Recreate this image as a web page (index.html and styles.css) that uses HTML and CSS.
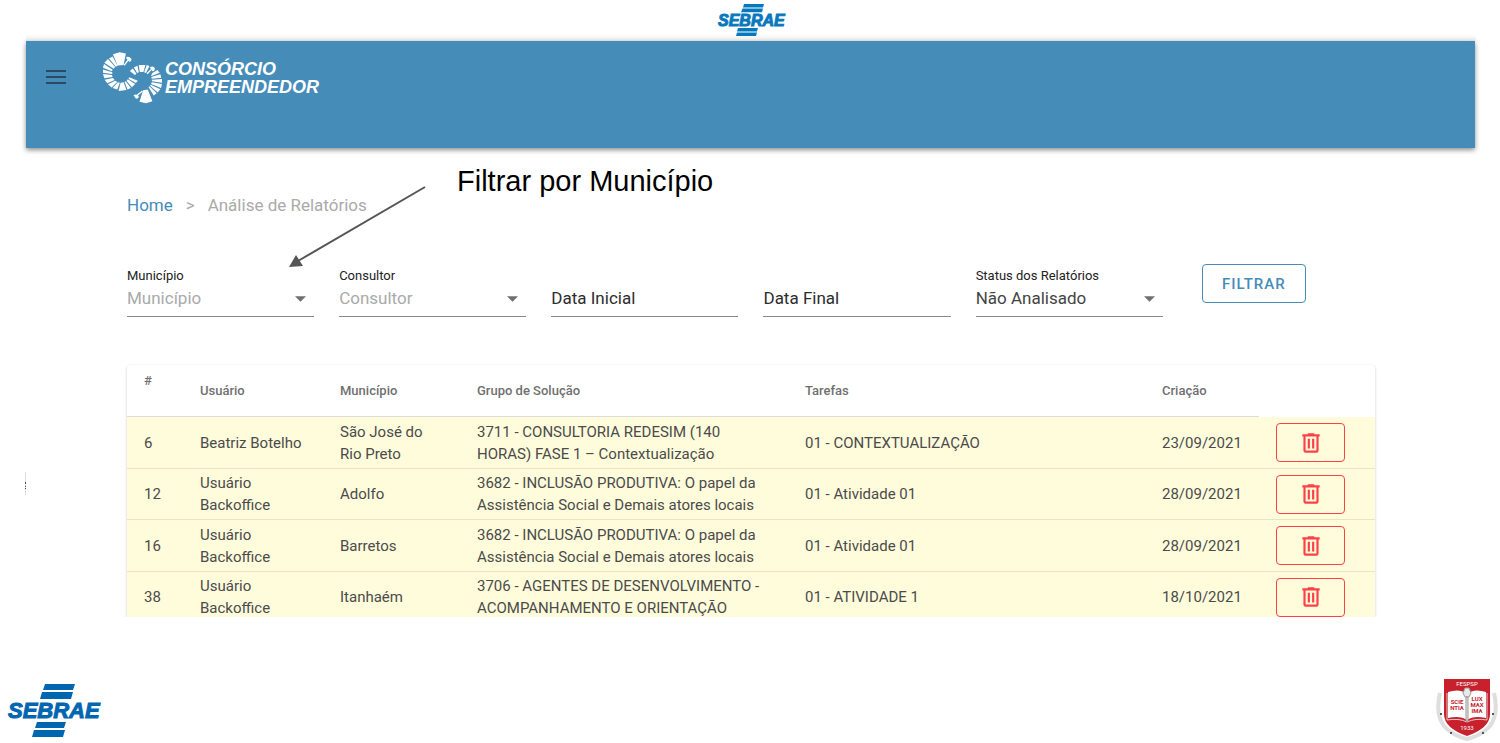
FILE: index.html
```html
<!DOCTYPE html>
<html lang="pt-BR">
<head>
<meta charset="utf-8">
<title>Análise de Relatórios</title>
<link rel="stylesheet" href="styles.css">
</head>
<body>
<svg class="defs" width="0" height="0" aria-hidden="true">
  <symbol id="trash" viewBox="0 0 24 24">
    <path d="M9 3V4H4V6H5V19A2 2 0 0 0 7 21H17A2 2 0 0 0 19 19V6H20V4H15V3H9M7 6H17V19H7V6M9 8V17H11V8H9M13 8V17H15V8H13Z"/>
  </symbol>
  <symbol id="caret" viewBox="0 0 10 5"><path d="M0 0H10L5 5Z"/></symbol>
</svg>

<div class="topbar">
  <svg class="sebrae sebrae-small" viewBox="0 0 66 33" role="img" aria-label="Sebrae">
    <path d="M26 0H46L45 3.6H25ZM24.500 4.600H45L44 8.300H23ZM20 24H40L39 27.400H19ZM19 28.400H39L38 32H18Z"/>
    <text class="sebrae-text" x="0" y="22">SEBRAE</text>
  </svg>
</div>

<header class="appbar">
  <button class="menu" type="button" aria-label="Menu">
    <svg width="20" height="14" viewBox="0 0 20 14"><path d="M0 0H20V2H0ZM0 6H20V8H0ZM0 12H20V14H0Z"/></svg>
  </button>
  <a class="brand" href="#">
    <svg class="brand-mark" viewBox="6 21 184 156" aria-hidden="true">
      <path d="M39 27L59 21L78 25L71 60L53 61ZM27 40L38 34L53 62L48 65ZM13 53L24 42L46 66L41 71ZM9 68L12 57L38 74L36 79ZM9 83L9 73L37 82L37 87ZM13 100L9 87L36 90L38 96ZM22 115L14 104L39 99L44 105ZM35 128L24 118L46 107L52 111ZM52 134L38 129L54 112L60 113ZM56 138L62 113L71 112L80 135ZM93 129L83 134L74 111L78 109ZM106 117L96 127L80 107L84 103ZM114 107L108 114L86 101L88 97ZM90 78L99 70L110 86L105 90ZM102 67L113 62L117 82L112 84ZM117 60L137 60L131 81L120 81ZM141 60L149 63L139 84L133 82ZM157 85L173 75L180 83L154 94ZM182 88L185 98L156 101L155 96ZM187 102L187 113L157 109L156 104ZM187 117L184 129L154 117L156 112ZM182 133L174 143L151 122L153 119ZM171 145L162 152L146 126L149 124ZM119 171L130 136L144 134L158 169L139 175Z"/>
      <path class="club" d="M73 61L86 43M142 86L158 70M128 138L112 151"/>
      <path d="M78 38Q86 30 95 42Q95 52 88 50ZM150 67Q160 60 165 69Q166 80 158 78ZM101 151Q110 145 117 154Q117 163 108 161Z"/>
    </svg>
    <span class="brand-name">CONSÓRCIO<br>EMPREENDEDOR</span>
  </a>
</header>

<main class="content">
  <nav class="crumbs" aria-label="Trilha">
    <a href="#">Home</a><span class="sep">&gt;</span><span>Análise de Relatórios</span>
  </nav>

  <form class="filters">
    <div class="field">
      <label for="municipio">Município</label>
      <select id="municipio" class="empty"><option>Município</option></select>
      <svg class="caret"><use href="#caret"/></svg>
    </div>
    <div class="field">
      <label for="consultor">Consultor</label>
      <select id="consultor" class="empty"><option>Consultor</option></select>
      <svg class="caret"><use href="#caret"/></svg>
    </div>
    <div class="field">
      <input type="text" aria-label="Data Inicial" placeholder="Data Inicial">
    </div>
    <div class="field">
      <input type="text" aria-label="Data Final" placeholder="Data Final">
    </div>
    <div class="field">
      <label for="status">Status dos Relatórios</label>
      <select id="status"><option>Não Analisado</option></select>
      <svg class="caret"><use href="#caret"/></svg>
    </div>
    <button class="filter-btn" type="button">FILTRAR</button>
  </form>

  <div class="card">
    <table>
      <colgroup><col class="c-id"><col class="c-user"><col class="c-city"><col class="c-group"><col><col class="c-date"><col class="c-act"></colgroup>
      <thead>
        <tr><th class="id">#</th><th>Usuário</th><th>Município</th><th>Grupo de Solução</th><th>Tarefas</th><th>Criação</th><td></td></tr>
      </thead>
      <tbody>
        <tr><td>6</td><td>Beatriz Botelho</td><td>São José do<br>Rio Preto</td><td>3711 - CONSULTORIA REDESIM (140<br>HORAS) FASE 1 – Contextualização</td><td>01 - CONTEXTUALIZAÇÃO</td><td>23/09/2021</td><td><button class="del" type="button" aria-label="Excluir"><svg><use href="#trash"/></svg></button></td></tr>
        <tr><td>12</td><td>Usuário<br>Backoffice</td><td>Adolfo</td><td>3682 - INCLUSÃO PRODUTIVA: O papel da<br>Assistência Social e Demais atores locais</td><td>01 - Atividade 01</td><td>28/09/2021</td><td><button class="del" type="button" aria-label="Excluir"><svg><use href="#trash"/></svg></button></td></tr>
        <tr><td>16</td><td>Usuário<br>Backoffice</td><td>Barretos</td><td>3682 - INCLUSÃO PRODUTIVA: O papel da<br>Assistência Social e Demais atores locais</td><td>01 - Atividade 01</td><td>28/09/2021</td><td><button class="del" type="button" aria-label="Excluir"><svg><use href="#trash"/></svg></button></td></tr>
        <tr><td>38</td><td>Usuário<br>Backoffice</td><td>Itanhaém</td><td>3706 - AGENTES DE DESENVOLVIMENTO -<br>ACOMPANHAMENTO E ORIENTAÇÃO</td><td>01 - ATIVIDADE 1</td><td>18/10/2021</td><td><button class="del" type="button" aria-label="Excluir"><svg><use href="#trash"/></svg></button></td></tr>
      </tbody>
    </table>
  </div>

  <svg class="arrow" viewBox="0 0 138 84" aria-hidden="true">
    <path class="shaft" d="M137 3L10 77"/>
    <path class="tip" d="M1 83L8 71L15 82Z"/>
  </svg>
  <p class="note">Filtrar por Município</p>
</main>

<svg class="edge" viewBox="0 0 1 23" aria-hidden="true"><path class="edge-line" d="M0 0H1V23H0Z"/><path class="edge-dark" d="M0 10H1V12H0ZM0 14H1V15H0Z"/><path class="edge-blue" d="M0 16H1V17H0Z"/></svg>

<footer class="footer">
  <svg class="sebrae sebrae-large" viewBox="0 0 94 54" role="img" aria-label="Sebrae">
    <path d="M37 0H67L65 6H35ZM34 8H65L63 15H32ZM29 38H58L56 44H27ZM26 46H57L55 53H24Z"/>
    <text class="sebrae-text" x="0" y="34">SEBRAE</text>
  </svg>
  <svg class="crest" viewBox="0 0 62 64" role="img" aria-label="FESPSP 1933">
    <path class="laurel" d="M4 15Q-1 36 8 48Q17 58 31 61Q45 58 54 48Q63 36 58 15"/>
    <path class="shield" d="M8 1H54V36Q54 50 31 58Q8 50 8 36Z"/>
    <path class="book" d="M12 14Q24 10 31 16Q38 10 50 14V40Q38 37 31 42Q24 37 12 40Z"/>
    <path class="book-edge" d="M11 15V42Q23 40 31 44Q39 40 51 42V15"/>
    <path class="torch" d="M30 19H32V43H30ZM27 15L29 10L33 10L35 15L33 19H29Z"/>
    <text class="crest-name" x="31" y="8">FESPSP</text>
    <text class="crest-word" x="21" y="26">SCIE</text>
    <text class="crest-word" x="21" y="32">NTIA</text>
    <text class="crest-word" x="41" y="23">LUX</text>
    <text class="crest-word" x="41" y="29">MAX</text>
    <text class="crest-word" x="41" y="35">IMA</text>
    <text class="crest-name" x="31" y="52">1933</text>
    <path class="dots" d="M4 35h2v2h-2zM56 35h2v2h-2zM14 54h2v2h-2zM46 54h2v2h-2z"/>
  </svg>
</footer>
</body>
</html>
```
FILE: styles.css
```css
* { box-sizing: border-box; }
body {
  position: relative;
  margin: 0;
  background: #fff;
  color: #4b4b4b;
  font-family: Roboto, "Liberation Sans", sans-serif;
}
button, input, select { font-family: inherit; }
.defs { position: absolute; }

.topbar {
  display: flex;
  justify-content: center;
  height: 41px;
  margin: 0 24px 0 26px;
  padding-top: 4px;
  background: linear-gradient(#fff 34px, #eee);
}
.sebrae { overflow: visible; fill: #0066b0; stroke-width: 1px; }
.sebrae-text { font: italic bold 22px "Liberation Sans", sans-serif; stroke: #0066b0; }
.sebrae-small { width: 66px; height: 33px; fill: #0878bc; }
.sebrae-small .sebrae-text { font-size: 16px; stroke: #0878bc; }
.sebrae-large { width: 94px; height: 54px; }

.appbar {
  display: flex;
  align-items: flex-start;
  gap: 36px;
  height: 107px;
  margin: 0 25px 0 26px;
  padding: 11px 20px;
  background: #458cb9;
  box-shadow: 0 2px 5px rgba(0, 0, 0, .45);
}
.menu {
  display: flex;
  padding: 0;
  margin-top: 18px;
  border: 0;
  background: none;
  fill: #294a60;
}
.brand { display: flex; gap: 2px; color: #fff; text-decoration: none; }
.brand-mark { width: 61px; height: 52px; fill: #fff; }
.club { stroke: #fff; stroke-width: 4px; }
.brand-name {
  margin-top: 8px;
  font: italic bold 18px/18px "Liberation Sans", sans-serif;
}

.content { position: relative; padding: 45px 125px 0 127px; }
.crumbs {
  display: flex;
  align-items: center;
  font-size: 17px;
  line-height: 24px;
  color: #aaa;
}
.crumbs a { color: #458cb9; text-decoration: none; }
.sep { margin: 0 13px; font-size: 17px; }

.filters {
  display: grid;
  grid-template-columns: repeat(5, 17fr) 15fr;
  margin-top: 47px;
}
.field {
  position: relative;
  display: flex;
  flex-direction: column;
  justify-content: flex-end;
  height: 53px;
  margin-right: 25px;
  border-bottom: 1px solid #8a8a8a;
}
.field label { font-size: 13px; line-height: 16px; color: #222; }
.field select, .field input {
  width: 100%;
  height: 28px;
  margin-bottom: 4px;
  padding: 0;
  border: 0;
  background: none;
  color: #444;
  font-size: 17px;
  appearance: none;
}
.field select.empty { color: #aaa; }
.field input::placeholder { color: #2c2c2c; opacity: 1; }
.caret {
  position: absolute;
  right: 8px;
  bottom: 14px;
  width: 11px;
  height: 6px;
  fill: #707070;
  pointer-events: none;
}
.filter-btn {
  justify-self: start;
  width: 104px;
  height: 39px;
  margin-left: 14px;
  border: 1px solid #458cb9;
  border-radius: 4px;
  background: none;
  color: #458cb9;
  font-size: 15px;
  font-weight: 500;
  letter-spacing: 1px;
}

.card {
  height: 252px;
  margin-top: 48px;
  overflow: hidden;
  border-radius: 4px 4px 0 0;
  box-shadow: 0 1px 3px rgba(0, 0, 0, .2);
  clip-path: inset(-3px -3px 0 -3px);
}
table { width: 100%; table-layout: fixed; border-collapse: separate; border-spacing: 0; }
.c-id { width: 56px; }
.c-user { width: 140px; }
.c-city { width: 137px; }
.c-group { width: 328px; }
.c-date { width: 114px; }
.c-act { width: 116px; }
th, td { padding: 0 0 0 17px; text-align: left; white-space: nowrap; }
th {
  height: 52px;
  border-bottom: 1px solid #ddd;
  font-size: 13px;
  font-weight: 500;
  color: #707070;
}
th.id { padding-bottom: 20px; }
tbody td {
  height: 52px;
  border-bottom: 1px solid #e8e4c4;
  background: #fffcdb;
  font-size: 15px;
  line-height: 22px;
}
tbody tr:nth-child(even) td { height: 51px; }
.del {
  display: flex;
  align-items: center;
  justify-content: center;
  width: 69px;
  height: 39px;
  padding: 0;
  border: 1px solid #ff4046;
  border-radius: 4px;
  background: none;
  fill: #ff4046;
}
.del svg { width: 26px; height: 26px; }

.arrow { position: absolute; left: 288px; top: 36px; width: 138px; height: 84px; }
.shaft { stroke: #555; stroke-width: 2px; }
.tip { fill: #555; }
.note {
  position: absolute;
  left: 457px;
  top: 16px;
  margin: 0;
  font: 29px/34px "Liberation Sans", sans-serif;
  color: #000;
  white-space: nowrap;
}
.edge { position: absolute; left: 25px; top: 472px; width: 1px; height: 23px; }
.edge-line { fill: #ddd; }
.edge-dark { fill: #555; }
.edge-blue { fill: #4040c0; }

.footer {
  display: flex;
  justify-content: space-between;
  align-items: flex-start;
  margin-top: 61px;
  padding: 0 2px 0 8px;
}
.footer .sebrae { margin-top: 6px; }
.crest { width: 62px; height: 64px; }
.laurel { fill: none; stroke: #dedede; stroke-width: 4px; }
.shield { fill: #c8202c; }
.book { fill: #fff; }
.book-edge { fill: none; stroke: #e8c8c8; stroke-width: 1px; }
.torch { fill: #e8e8e8; stroke: #999; stroke-width: 1px; }
.crest-name { fill: #fff; font: 6px Roboto, sans-serif; text-anchor: middle; }
.crest-word { fill: #c8202c; font: bold 6px Roboto, sans-serif; text-anchor: middle; }
.dots { fill: #555; }
```
